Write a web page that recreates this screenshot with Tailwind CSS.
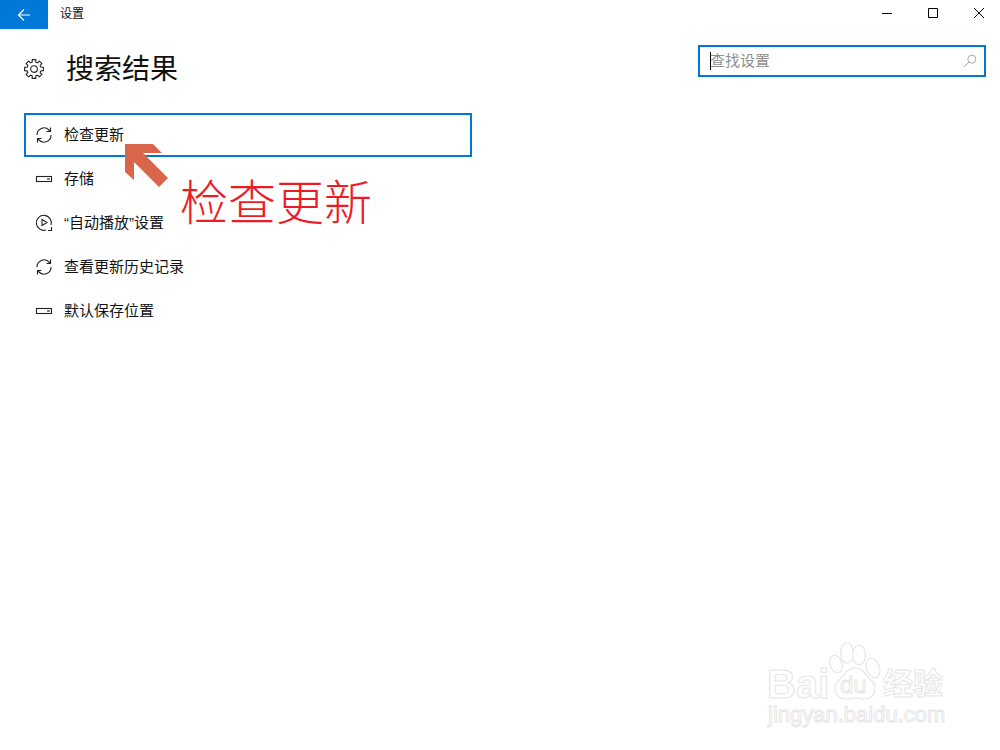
<!DOCTYPE html>
<html lang="zh-CN">
<head>
  <meta charset="UTF-8" />
  <title>设置</title>
  <script src="https://cdn.jsdelivr.net/npm/@tailwindcss/browser@4"></script>
</head>
<body class="bg-white w-[1000px] h-[750px] overflow-hidden relative font-['Liberation_Sans','Noto_Sans_CJK_SC',sans-serif] text-[#111]">

  <!-- title bar -->
  <div class="flex items-center h-[29px]">
    <div class="w-[48px] h-[29px] bg-[#0078d7] flex items-center justify-center">
      <svg width="16" height="14" viewBox="0 0 16 14" fill="none" stroke="#fff" stroke-width="1.2"><path d="M14 7H2.5M8 1.5 2.5 7 8 12.500"/></svg>
    </div>
    <span class="ml-[12px] text-[12px] leading-[24px] -mt-[2px]">设置</span>
    <div class="ml-auto flex items-center -mt-[3px]">
      <div class="w-[46px] h-[26px] flex items-center justify-center">
        <svg width="12" height="12" viewBox="0 0 12 12" stroke="#000" fill="none"><path d="M1 6.500H11"/></svg>
      </div>
      <div class="w-[46px] h-[26px] flex items-center justify-center">
        <svg width="12" height="12" viewBox="0 0 12 12" stroke="#000" fill="none"><path d="M1.500 1.500h9v9h-9z"/></svg>
      </div>
      <div class="w-[46px] h-[26px] flex items-center justify-center mr-[-2px]">
        <svg width="12" height="12" viewBox="0 0 12 12" stroke="#000" fill="none"><path d="M1 1l10 10M11 1 1 11"/></svg>
      </div>
    </div>
  </div>

  <!-- header -->
  <div class="flex justify-between pl-[24px] pr-[14px] mt-[16px]">
    <div class="flex items-center h-[48px]">
      <svg width="20" height="20" viewBox="0 0 24 24" fill="none" stroke="#222" stroke-width="1.3" stroke-linejoin="round">
        <path d="M20.21 9.8 23.29 9.81 23.29 14.19 20.21 14.2 19.36 16.25 21.53 18.44 18.43 21.53 16.25 19.36 14.2 20.21 14.19 23.29 9.81 23.29 9.8 20.21 7.75 19.36 5.57 21.53 2.47 18.44 4.64 16.25 3.79 14.2 .71 14.19 .71 9.81 3.79 9.8 4.64 7.75 2.47 5.56 5.57 2.47 7.75 4.64 9.8 3.79 9.81 .71 14.19 .71 14.2 3.79 16.25 4.64 18.43 2.47 21.53 5.56 19.36 7.75z"/>
        <circle cx="12" cy="12" r="4"/>
      </svg>
      <h1 class="ml-[22px] text-[28px] leading-[48px] font-normal pt-[2px]">搜索结果</h1>
    </div>
    <div class="w-[288px] h-[32px] border-2 border-[#0078d7] flex items-center pl-[10px] pr-[7px]">
      <span class="w-px h-[18px] bg-black"></span>
      <span class="text-[15px] text-[#8f8f8f] leading-none pb-[2px] -ml-px">查找设置</span>
      <svg class="ml-auto" width="14" height="14" viewBox="0 0 14 14" fill="none" stroke="#a8a8a8"><circle cx="8.800" cy="5.200" r="4"/><path d="M6 8 1 13"/></svg>
    </div>
  </div>

  <!-- results -->
  <ul class="ml-[24px] mt-[20px] w-[448px] text-[15px]">
    <li class="h-[44px] flex items-center pl-[9px] border-2 border-[#0078d7]">
      <svg width="18" height="18" viewBox="0 0 18 18" fill="none" stroke="#222" stroke-width="1.1"><path d="M2 9a7 7 0 0 1 12-5l1.500 1.500M16 9a7 7 0 0 1-12 5l-1.500-1.500M15.500 1.500v4h-4M2.500 16.500v-4h4"/></svg>
      <span class="ml-[11px]">检查更新</span>
    </li>
    <li class="h-[44px] flex items-center pl-[11px]">
      <svg width="18" height="18" viewBox="0 0 18 18" fill="none" stroke="#222" stroke-width="1.1"><rect x="1.500" y="6.500" width="15" height="5"/><path d="M12 9h3"/></svg>
      <span class="ml-[11px]">存储</span>
    </li>
    <li class="h-[44px] flex items-center pl-[11px]">
      <svg width="18" height="18" viewBox="0 0 18 18" fill="none" stroke="#222" stroke-width="1.1"><path d="M11 16a7.500 7.500 0 1 1 5-5M7 5.500v6l5-3zM16.500 13v3.500H13"/></svg>
      <span class="ml-[11px]">“自动播放”设置</span>
    </li>
    <li class="h-[44px] flex items-center pl-[11px]">
      <svg width="18" height="18" viewBox="0 0 18 18" fill="none" stroke="#222" stroke-width="1.1"><path d="M2 9a7 7 0 0 1 12-5l1.500 1.500M16 9a7 7 0 0 1-12 5l-1.500-1.500M15.500 1.500v4h-4M2.500 16.500v-4h4"/></svg>
      <span class="ml-[11px]">查看更新历史记录</span>
    </li>
    <li class="h-[44px] flex items-center pl-[11px]">
      <svg width="18" height="18" viewBox="0 0 18 18" fill="none" stroke="#222" stroke-width="1.1"><rect x="1.500" y="6.500" width="15" height="5"/><path d="M12 9h3"/></svg>
      <span class="ml-[11px]">默认保存位置</span>
    </li>
  </ul>

  <!-- annotation arrow and label -->
  <svg class="absolute left-[120px] top-[140px]" width="52" height="50" viewBox="120 140 52 50" fill="#d9654a"><path d="M125 144h28l9 9h-19l25 25-9 9-25-25v18l-9-8z"/></svg>
  <div class="absolute left-[180px] top-[164px] text-[48px] leading-[70px] font-light font-['Noto_Sans_CJK_SC',serif] text-[#ed1c24] whitespace-nowrap">检查更新</div>

  <!-- watermark -->
  <div class="absolute left-[766px] top-[642px] w-[190px] h-[90px] text-transparent [-webkit-text-stroke:1px_#e6e6e6]">
    <svg class="absolute left-[62px] top-[1px]" width="54" height="58" viewBox="0 0 54 58" fill="#fff" stroke="#e6e6e6" stroke-width="1.200">
      <ellipse cx="8" cy="21" rx="6" ry="9" transform="rotate(-20 8 21)"/>
      <ellipse cx="19" cy="10" rx="6.500" ry="10"/>
      <ellipse cx="31" cy="12" rx="6.500" ry="10"/>
      <ellipse cx="45" cy="25" rx="6.500" ry="10" transform="rotate(-20 45 25)"/>
      <path d="M27 25c8 0 11 8 16 12 7 6 5 19-7 19-4 0-6-1-9-1s-5 1-9 1c-12 0-14-13-7-19 5-4 8-12 16-12z"/>
    </svg>
    <span class="absolute left-[1px] top-[25px] text-[40px] leading-[34px] font-bold">Bai</span>
    <span class="absolute left-[74px] top-[31px] text-[24px] leading-[24px]">du</span>
    <span class="absolute left-[117px] top-[25px] text-[30px] leading-[34px] font-bold whitespace-nowrap">经验</span>
    <span class="absolute left-[2px] top-[61px] text-[22px] leading-[24px] whitespace-nowrap">jingyan.baidu.com</span>
  </div>
</body>
</html>
